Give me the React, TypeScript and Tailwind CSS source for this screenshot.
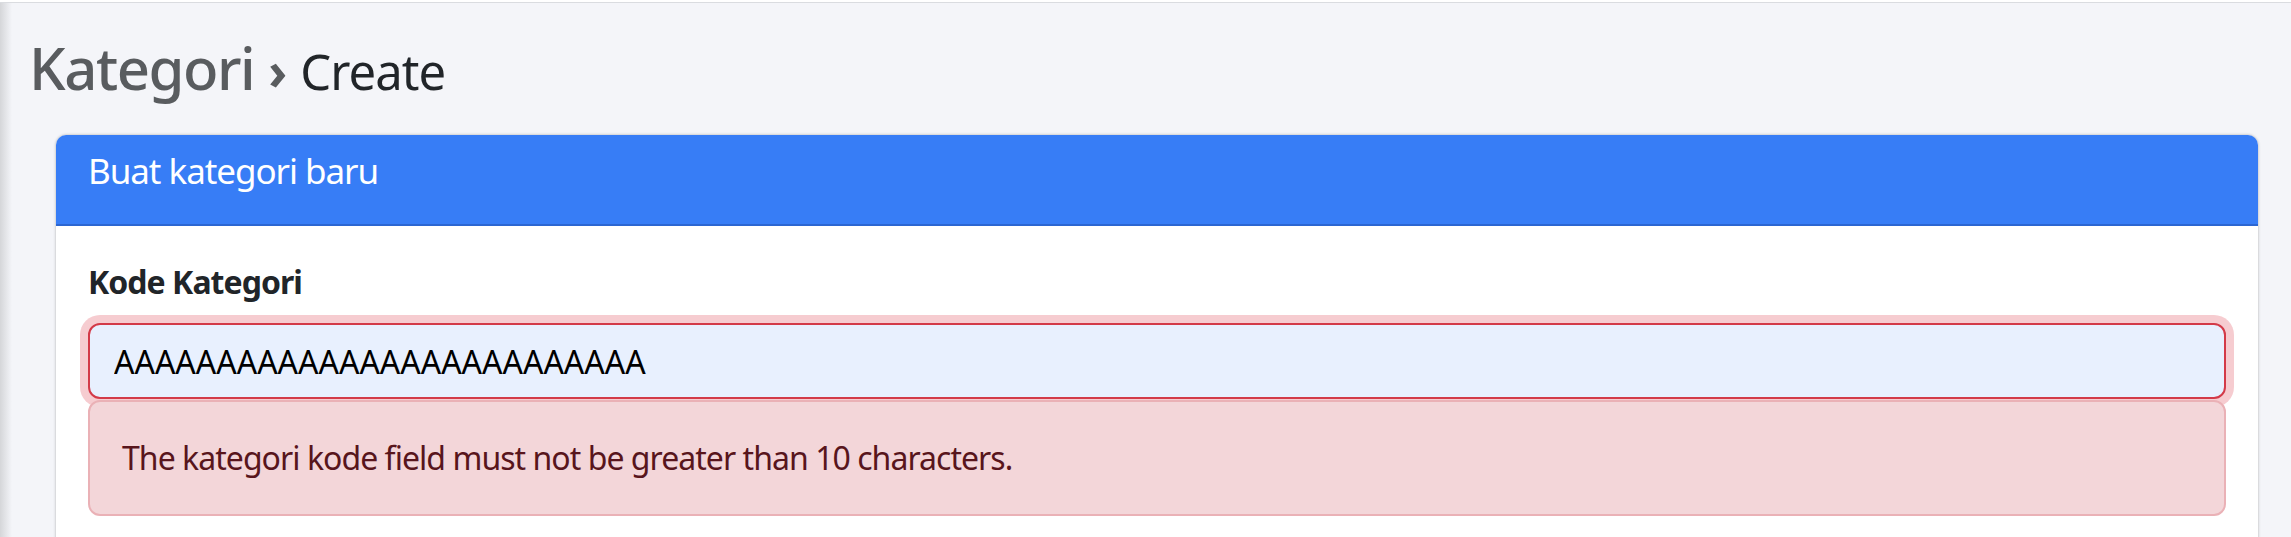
import React from "react";

export default function App() {
  return (
    <div className="min-h-screen w-full bg-[#f4f5f9] font-['Noto_Sans','Open_Sans',sans-serif] text-[#212529]">
      <div className="h-[2px] bg-white" />
      <div className="h-[1px] bg-[#dadce0]" />
      <div className="flex">
        <div className="w-[12px] shrink-0 bg-linear-to-r from-[#d5d6d9] to-[#f4f5f9]" />
        <div className="min-w-0 flex-1">
          <div className="h-[132px] pl-[17px] pt-[30px]">
            <h1 className="flex items-baseline leading-[70px]">
              <span className="text-[58px] font-medium tracking-[-0.025em] text-[#595c5f]">Kategori</span>
              <span className="ml-[14px] text-[52px] font-bold text-[#595c5f]">›</span>
              <span className="ml-[13px] text-[49px] font-normal tracking-[-0.02em] text-[#212529]">Create</span>
            </h1>
          </div>
          <div className="ml-[44px] mr-[33px] rounded-t-[10px] bg-white shadow-[0_0_3px_rgba(0,0,0,0.3)]">
            <div className="h-[91px] rounded-t-[10px] border-b-2 border-[#2c66d1] bg-[#377df6] px-[32px] pt-[12px]">
              <div className="text-[35px] leading-[48px] tracking-[-0.03em] text-white">Buat kategori baru</div>
            </div>
            <div className="p-[32px]">
              <label className="mb-[17px] block text-[32px] font-bold leading-[48px] tracking-[-0.03em] text-[#212529]">
                Kode Kategori
              </label>
              <input
                readOnly
                value="AAAAAAAAAAAAAAAAAAAAAAAAAA"
                className="block h-[76px] w-full rounded-[12px] border-2 border-[#d33a48] bg-[#e8f0fe] px-[24px] text-[32px] text-black shadow-[0_0_0_8px_rgba(220,53,69,0.25)] outline-none"
              />
              <div className="mt-[1px] rounded-[12px] border-2 border-[#eab1b6] bg-[#f3d6d9] p-[32px] text-[32px] leading-[48px] tracking-[-0.03em] text-[#58151c]">
                The kategori kode field must not be greater than 10 characters.
              </div>
            </div>
          </div>
        </div>
      </div>
    </div>
  );
}
